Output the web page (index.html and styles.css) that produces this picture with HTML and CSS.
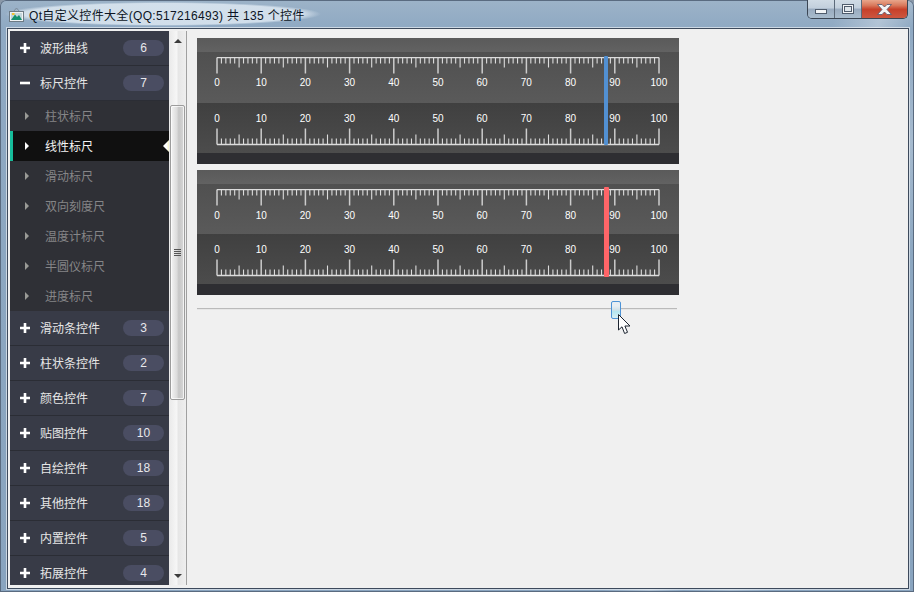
FILE: index.html
```html
<!DOCTYPE html>
<html lang="zh-CN">
<head>
<meta charset="utf-8">
<title>Qt自定义控件大全</title>
<link rel="stylesheet" href="styles.css">
</head>
<body>
<svg class="defs" width="0" height="0" aria-hidden="true">
  <defs>
    <g id="decade">
      <path class="tick-long" d="M0 0v16"/>
      <path d="M4.42 0v6M8.84 0v6M13.26 0v6M17.68 0v6M26.52 0v6M30.94 0v6M35.36 0v6M39.78 0v6"/>
      <path d="M22.1 0v10"/>
    </g>
    <g id="scale">
      <use href="#decade"/>
      <use href="#decade" x="44.2"/>
      <use href="#decade" x="88.4"/>
      <use href="#decade" x="132.6"/>
      <use href="#decade" x="176.8"/>
      <use href="#decade" x="221"/>
      <use href="#decade" x="265.2"/>
      <use href="#decade" x="309.4"/>
      <use href="#decade" x="353.6"/>
      <use href="#decade" x="397.8"/>
      <path class="tick-long" d="M442 0v16"/>
      <path class="tick-base" d="M0 0H442"/>
    </g>
  </defs>
</svg>

<div class="window">
  <header class="titlebar">
    <div class="title">
      <svg class="app-icon" width="15" height="15" viewBox="0 0 15 15">
        <path d="M4.5 4.5 7.5 1 10.5 4.5" fill="none" stroke="#7f8c9a"/>
        <rect x=".5" y="4.5" width="14" height="10" fill="#eef2f4" stroke="#6d7a84"/>
        <rect x="2" y="6" width="11" height="7" fill="#c4d6dc"/>
        <path d="M2 13 6 7.5 8 10 10 8 13 13Z" fill="#14906e"/>
        <rect x="3" y="6" width="2.5" height="2" fill="#f2c230"/>
      </svg>
      <span>Qt自定义控件大全(QQ:517216493) 共 135 个控件</span>
    </div>
    <div class="caption">
      <div class="cap cap-min"><i></i></div>
      <div class="cap cap-max"><i></i></div>
      <div class="cap cap-close">
        <svg width="17" height="11" viewBox="0 0 17 11"><path d="M1.5.5H6L8.5 3 11 .5h4.5L11 5.5l4.5 5H11L8.5 8 6 10.500H1.500L6 5.500Z" fill="#f4f4f6" stroke="#55556a" stroke-width=".8"/></svg>
      </div>
    </div>
  </header>

  <div class="client">
    <nav class="nav">
      <div class="nav-list">
        <div class="group"><svg class="sign" width="10" height="10" viewBox="0 0 10 10"><path d="M0 5h10M5 0v10"/></svg><span class="group-name">波形曲线</span><span class="badge">6</span></div>
        <div class="group"><svg class="sign" width="10" height="10" viewBox="0 0 10 10"><path d="M0 5h10"/></svg><span class="group-name">标尺控件</span><span class="badge">7</span></div>
        <div class="item"><i class="arrow"></i><span class="item-name">柱状标尺</span></div>
        <div class="item item-active"><i class="arrow"></i><span class="item-name">线性标尺</span><i class="pointer"></i></div>
        <div class="item"><i class="arrow"></i><span class="item-name">滑动标尺</span></div>
        <div class="item"><i class="arrow"></i><span class="item-name">双向刻度尺</span></div>
        <div class="item"><i class="arrow"></i><span class="item-name">温度计标尺</span></div>
        <div class="item"><i class="arrow"></i><span class="item-name">半圆仪标尺</span></div>
        <div class="item"><i class="arrow"></i><span class="item-name">进度标尺</span></div>
        <div class="group"><svg class="sign" width="10" height="10" viewBox="0 0 10 10"><path d="M0 5h10M5 0v10"/></svg><span class="group-name">滑动条控件</span><span class="badge">3</span></div>
        <div class="group"><svg class="sign" width="10" height="10" viewBox="0 0 10 10"><path d="M0 5h10M5 0v10"/></svg><span class="group-name">柱状条控件</span><span class="badge">2</span></div>
        <div class="group"><svg class="sign" width="10" height="10" viewBox="0 0 10 10"><path d="M0 5h10M5 0v10"/></svg><span class="group-name">颜色控件</span><span class="badge">7</span></div>
        <div class="group"><svg class="sign" width="10" height="10" viewBox="0 0 10 10"><path d="M0 5h10M5 0v10"/></svg><span class="group-name">贴图控件</span><span class="badge">10</span></div>
        <div class="group"><svg class="sign" width="10" height="10" viewBox="0 0 10 10"><path d="M0 5h10M5 0v10"/></svg><span class="group-name">自绘控件</span><span class="badge">18</span></div>
        <div class="group"><svg class="sign" width="10" height="10" viewBox="0 0 10 10"><path d="M0 5h10M5 0v10"/></svg><span class="group-name">其他控件</span><span class="badge">18</span></div>
        <div class="group"><svg class="sign" width="10" height="10" viewBox="0 0 10 10"><path d="M0 5h10M5 0v10"/></svg><span class="group-name">内置控件</span><span class="badge">5</span></div>
        <div class="group"><svg class="sign" width="10" height="10" viewBox="0 0 10 10"><path d="M0 5h10M5 0v10"/></svg><span class="group-name">拓展控件</span><span class="badge">4</span></div>
      </div>
      <div class="scrollbar">
        <div class="scroll-btn"><i class="tri-up"></i></div>
        <div class="scroll-thumb"><i class="grip"></i></div>
        <div class="scroll-btn scroll-btn-end"><i class="tri-down"></i></div>
      </div>
    </nav>

    <main class="pane">
      <section class="ruler">
        <div class="band-cap"></div>
        <div class="band-top band-tall">
          <svg class="ticks" width="446" height="18"><use href="#scale" x="1" y=".5"/></svg>
          <div class="labels labels-top"><span>0</span><span>10</span><span>20</span><span>30</span><span>40</span><span>50</span><span>60</span><span>70</span><span>80</span><span>90</span><span>100</span></div>
        </div>
        <div class="band-bottom">
          <div class="labels"><span>0</span><span>10</span><span>20</span><span>30</span><span>40</span><span>50</span><span>60</span><span>70</span><span>80</span><span>90</span><span>100</span></div>
          <svg class="ticks ticks-bottom" width="446" height="18"><g transform="matrix(1 0 0 -1 0 16.5)"><use href="#scale" x="1"/></g></svg>
        </div>
        <div class="band-foot"></div>
        <div class="marker marker-blue"></div>
      </section>

      <section class="ruler">
        <div class="band-cap"></div>
        <div class="band-top">
          <svg class="ticks" width="446" height="18"><use href="#scale" x="1" y=".5"/></svg>
          <div class="labels labels-top labels-shift"><span>0</span><span>10</span><span>20</span><span>30</span><span>40</span><span>50</span><span>60</span><span>70</span><span>80</span><span>90</span><span>100</span></div>
        </div>
        <div class="band-bottom">
          <div class="labels"><span>0</span><span>10</span><span>20</span><span>30</span><span>40</span><span>50</span><span>60</span><span>70</span><span>80</span><span>90</span><span>100</span></div>
          <svg class="ticks ticks-bottom" width="446" height="18"><g transform="matrix(1 0 0 -1 0 16.5)"><use href="#scale" x="1"/></g></svg>
        </div>
        <div class="band-foot"></div>
        <div class="marker marker-red"></div>
      </section>

      <div class="slider">
        <div class="slider-groove"></div>
        <div class="slider-handle"></div>
        <svg class="cursor" width="14" height="21" viewBox="0 0 14 21">
          <path d="M.5.5V16L4 12.8 6.600 19.500 9.500 18.300 6.900 12H12Z" fill="#fff" stroke="#1c2430" stroke-linejoin="round"/>
        </svg>
      </div>
    </main>
  </div>
</div>
</body>
</html>
```

FILE: styles.css
```css
* { box-sizing: border-box; }

html, body {
  margin: 0;
  height: 100%;
  overflow: hidden;
  background: #8a98a8;
}

body {
  font-family: "Liberation Sans", "Noto Sans CJK SC", sans-serif;
  font-size: 12px;
}

.defs { position: absolute; }

.window {
  width: 914px;
  height: 592px;
  display: flex;
  flex-direction: column;
  padding: 0 5px 3px 7px;
  border-radius: 6px 6px 0 0;
  background:
    linear-gradient(112deg, transparent 0 73%, rgba(255,255,255,.3) 77%, transparent 80%, rgba(255,255,255,.22) 84%, transparent 88%),
    linear-gradient(180deg, #9db3c8 0, #8fa9c3 28px, #8ba6c0 60%, #89a4bf 100%);
  box-shadow: inset 0 0 0 1px #5a6b80;
}

/* title bar */
.titlebar {
  height: 28px;
  flex: none;
  display: flex;
  justify-content: space-between;
  align-items: flex-start;
}

.title {
  display: flex;
  align-items: center;
  gap: 5px;
  height: 24px;
  margin-top: 2px;
  margin-left: -2px;
  padding: 0 16px 0 4px;
  color: #0c1524;
  font-size: 12px;
  letter-spacing: .33px;
  white-space: nowrap;
  background: radial-gradient(closest-side, rgba(225,235,244,.8) 88%, rgba(225,235,244,0) 100%);
}

.app-icon { flex: none; }

.caption {
  display: flex;
  height: 19px;
  margin-right: 1px;
  border: 1px solid #3b4654;
  border-top: 0;
  border-radius: 0 0 5px 5px;
  overflow: hidden;
}

.cap {
  display: flex;
  align-items: center;
  justify-content: center;
  height: 18px;
  background: linear-gradient(180deg, #d0dbe5 0, #c2cfdc 45%, #99abbf 50%, #a9bccd 100%);
  border-right: 1px solid #5c6a7a;
}

.cap-min { width: 27px; }
.cap-max { width: 27px; }

.cap-min i {
  display: block;
  width: 12px;
  height: 5px;
  margin-top: 5px;
  background: #f2f4f6;
  border: 1px solid #4f5c6c;
}

.cap-max i {
  display: block;
  width: 12px;
  height: 10px;
  background: #dfe6ec;
  border: 2px solid #f4f6f8;
  outline: 1px solid #4f5c6c;
  outline-offset: -1px;
  box-shadow: inset 0 0 0 1px #4f5c6c;
}

.cap-close {
  width: 45px;
  border-right: 0;
  background: linear-gradient(180deg, #e8a68c 0, #d9795c 30%, #c7412a 52%, #cd5640 100%);
}

/* client area */
.client {
  flex: 1;
  min-height: 0;
  display: flex;
  background: #f0f0f0;
  border: 1px solid #3d4a5c;
  box-shadow: 0 0 0 1px rgba(255,255,255,.55);
}

/* navigation */
.nav {
  width: 177px;
  flex: none;
  display: flex;
  margin: 2px 0 3px 2px;
  border-right: 1px solid #a0a0a0;
  box-shadow: 1px 0 0 #fff;
}

.nav-list {
  width: 159px;
  flex: none;
  overflow: hidden;
  background: #383b47;
}

.group {
  height: 35px;
  display: flex;
  align-items: center;
  padding: 0 5px 0 10px;
  color: #e6e6e6;
  background: #383b47;
  border-bottom: 1px solid #2b2d35;
  flex: none;
}

.sign {
  flex: none;
  fill: none;
  stroke: #fff;
  stroke-width: 2.6;
}

.group-name {
  flex: 1;
  margin-left: 10px;
  margin-top: -2px;
  font-size: 12px;
}

.badge {
  width: 41px;
  height: 16px;
  flex: none;
  border-radius: 8px;
  background: #4a4d62;
  color: #e8e8ec;
  line-height: 17px;
  text-align: center;
  font-size: 12px;
}

.item {
  position: relative;
  height: 30px;
  display: flex;
  align-items: center;
  padding-left: 15px;
  color: #858587;
  background: #2f3036;
}

.item-name { margin-top: -2px; }

.arrow {
  width: 0;
  height: 0;
  margin-right: 16px;
  border-left: 4px solid #9a9a96;
  border-top: 4px solid transparent;
  border-bottom: 4px solid transparent;
}

.item-active {
  color: #f4f4f4;
  background: #101010;
  box-shadow: inset 3px 0 0 #16bc9a;
}

.item-active .arrow { border-left-color: #fff; }

.pointer {
  position: absolute;
  right: 0;
  top: 9px;
  width: 6px;
  height: 12px;
  background: linear-gradient(90deg, #fff 0 60%, #f6f4c8 100%);
  clip-path: polygon(100% 0, 100% 100%, 0 50%);
}

/* scrollbar */
.scrollbar {
  width: 17px;
  flex: none;
  display: flex;
  flex-direction: column;
  align-items: center;
  background: linear-gradient(90deg, #e9e9e9, #f6f6f6 45%, #e6e6e6 55%, #efefef);
}

.scroll-btn {
  height: 17px;
  flex: none;
  display: flex;
  align-items: center;
  justify-content: center;
  padding-top: 3px;
}

.scroll-btn-end {
  margin-top: auto;
  padding-top: 0;
  padding-bottom: 2px;
}

.tri-up, .tri-down {
  width: 0;
  height: 0;
  border-left: 4px solid transparent;
  border-right: 4px solid transparent;
}

.tri-up { border-bottom: 4px solid #3c3c3c; }
.tri-down { border-top: 4px solid #3c3c3c; }

.scroll-thumb {
  width: 15px;
  height: 295px;
  margin-top: 57px;
  flex: none;
  display: flex;
  align-items: center;
  justify-content: center;
  border: 1px solid #9c9c9c;
  border-radius: 2px;
  background: linear-gradient(90deg, #f4f4f4, #dcdcdc 45%, #c6c6c6 60%, #d8d8d8);
  box-shadow: inset 0 0 0 1px rgba(255,255,255,.7);
}

.grip {
  width: 7px;
  height: 7px;
  background: repeating-linear-gradient(180deg, #555 0 1px, transparent 1px 2px);
}

/* content */
.pane {
  flex: 1;
  min-width: 0;
  padding: 9px 0 0 10px;
  display: flex;
  flex-direction: column;
  gap: 6px;
  background: #f0f0f0;
}

.ruler {
  position: relative;
  width: 482px;
  flex: none;
}

.band-cap {
  height: 14px;
  background: linear-gradient(180deg, #5a5a5a, #626262);
}

.band-top {
  height: 50px;
  padding-top: 5px;
  background: linear-gradient(180deg, #505050, #5a5a5a);
}

.band-tall { height: 51px; }

.band-bottom {
  height: 50px;
  padding-top: 10px;
  background: linear-gradient(180deg, #404040, #4c4c4c);
}

.band-foot {
  height: 11px;
  background: #2e2e32;
}

.ticks {
  display: block;
  margin-left: 19px;
  fill: none;
  stroke: #dcdcdc;
  stroke-width: 1.1;
}

.tick-long { stroke-width: 1.5; stroke: #cccccc; }
.tick-base { stroke-width: 1.5; }

.ticks-bottom { margin-top: 3px; }

.labels {
  display: grid;
  grid-template-columns: repeat(11, 44.2px);
  width: 486.2px;
  margin-left: -2.1px;
  color: #fff;
  font-size: 10px;
  line-height: 12px;
  text-align: center;
}

.labels-top { margin-top: 2px; }
.labels-shift { margin-top: 3px; }

.marker {
  position: absolute;
  left: 407px;
  border-radius: 1px;
}

.marker-blue {
  top: 18px;
  width: 4px;
  height: 89px;
  background: #5290d2;
}

.marker-red {
  top: 17px;
  width: 5px;
  height: 90px;
  background: #ff6568;
}

/* slider */
.slider {
  position: relative;
  width: 480px;
  height: 18px;
  flex: none;
}

.slider-groove {
  position: absolute;
  left: 0;
  right: 0;
  top: 7px;
  height: 2px;
  background: linear-gradient(180deg, #bababa 50%, #e6e6e6 50%);
}

.slider-handle {
  position: absolute;
  left: 414px;
  top: 0;
  width: 10px;
  height: 18px;
  border: 1px solid #4d93d6;
  border-radius: 2px;
  background: linear-gradient(180deg, #e8eef3 0 25%, #cfe0e8 50%, #b4e6f0 60%, #d8f0f4 100%);
}

.cursor {
  position: absolute;
  left: 421px;
  top: 13px;
}
```
